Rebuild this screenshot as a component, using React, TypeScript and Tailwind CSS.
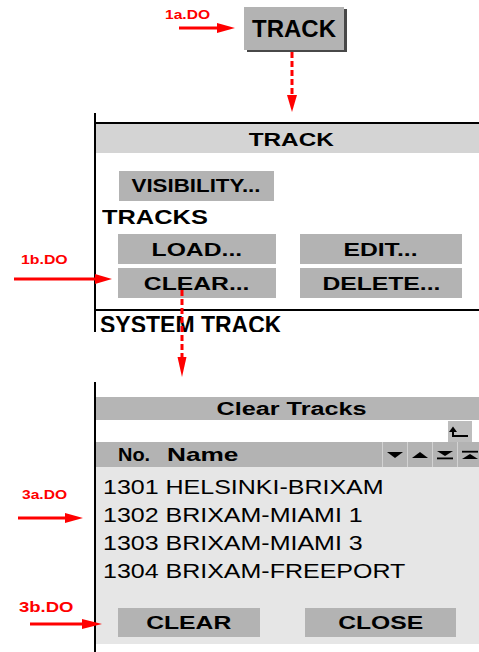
import React from 'react'

const red = '#ff0000'

function GrayButton({ label, className }: { label: string; className: string }) {
  return (
    <div className={`flex items-center justify-center bg-[#b3b3b3] ${className}`}>
      <span className="inline-block scale-x-[1.3] text-[19px] leading-none font-bold text-black">{label}</span>
    </div>
  )
}

function SortIcon({ kind }: { kind: 'down' | 'up' | 'bottom' | 'top' }) {
  return (
    <svg width="16" height="10" viewBox="0 0 16 10">
      {kind === 'down' && <polygon points="0,2 16,2 8,8" fill="#000" />}
      {kind === 'up' && <polygon points="0,8 16,8 8,2" fill="#000" />}
      {kind === 'bottom' && (
        <>
          <polygon points="0,1 16,1 8,6" fill="#000" />
          <rect x="0" y="7.5" width="16" height="1.8" fill="#000" />
        </>
      )}
      {kind === 'top' && (
        <>
          <rect x="0" y="0.8" width="16" height="1.8" fill="#000" />
          <polygon points="0,9 16,9 8,4" fill="#000" />
        </>
      )}
    </svg>
  )
}

const tracks = ['1301 HELSINKI-BRIXAM', '1302 BRIXAM-MIAMI 1', '1303 BRIXAM-MIAMI 3', '1304 BRIXAM-FREEPORT']

function Label({ text, className }: { text: string; className: string }) {
  return (
    <span className={`absolute inline-block origin-left font-bold leading-none text-[#ff0000] ${className}`}>{text}</span>
  )
}

export default function App() {
  return (
    <div className="relative w-[479px] h-[652px] overflow-hidden bg-white font-['Liberation_Sans',Arial,sans-serif] text-black">
      {/* top menu button */}
      <div className="h-[113px] pt-[7px] pl-[244px]">
        <div className="flex h-[43px] w-[100px] items-center justify-center bg-[#b3b3b3] shadow-[3px_2px_0_#484848]">
          <span className="text-[24px] leading-none font-bold">TRACK</span>
        </div>
      </div>

      {/* TRACK menu */}
      <div className="ml-[94px] h-[219px] overflow-hidden border-l-2 border-black pt-[9px]">
        <div className="flex h-[31px] items-center justify-center border-t-2 border-black bg-[#d4d4d4] pl-[7px] pt-[2px]">
          <span className="inline-block scale-x-[1.28] text-[19px] leading-none font-bold">TRACK</span>
        </div>
        <div className="mt-[18px] ml-[23px] flex h-[30px] w-[155px] items-center justify-center bg-[#b3b3b3]">
          <span className="inline-block scale-x-[1.24] text-[18px] leading-none font-bold">VISIBILITY...</span>
        </div>
        <div className="mt-[6px] ml-[6px] text-[20px] leading-[20px] font-bold">
          <span className="inline-block origin-left scale-x-[1.27]">TRACKS</span>
        </div>
        <div className="mt-[7px] ml-[22px] grid grid-cols-[158px_162px] gap-x-[24px] gap-y-[4px]">
          <GrayButton label="LOAD..." className="h-[30px]" />
          <GrayButton label="EDIT..." className="h-[30px]" />
          <GrayButton label="CLEAR..." className="h-[30px]" />
          <GrayButton label="DELETE..." className="h-[30px]" />
        </div>
        <div className="mt-[11px] border-t-2 border-black pt-[3px] pl-[4px] text-[23px] leading-[23px] font-bold">
          SYSTEM TRACK
        </div>
      </div>

      {/* Clear Tracks dialog */}
      <div className="mt-[50px] ml-[94px] h-[270px] border-l-2 border-black pt-[15px]">
        <div className="flex h-[23px] items-center justify-center bg-[#b5b5b5] pl-[8px]">
          <span className="inline-block scale-x-[1.4] text-[18px] leading-none font-bold">Clear Tracks</span>
        </div>
        <div className="flex h-[22px] justify-end pr-[7px] pt-[1px]">
          <div className="h-[21px] w-[24px] bg-[#bdbdbd]">
            <svg width="24" height="21" viewBox="0 0 24 21">
              <polygon points="1,11 9,11 5,5.5" fill="#000" />
              <path d="M5 10 V15 H20" stroke="#000" strokeWidth="2" fill="none" />
            </svg>
          </div>
        </div>
        <div className="-mr-[3px] flex h-[25px] items-center bg-[#b3b3b3]">
          <div className="flex flex-1 items-center pl-[22px] text-[19px] leading-none font-bold">
            <span className="inline-block w-[49px] origin-left scale-x-[1.05]">No.</span>
            <span className="inline-block origin-left scale-x-[1.38]">Name</span>
          </div>
          <div className="flex h-full w-[25px] items-center justify-center border-l border-[#d2d2d2]">
            <SortIcon kind="down" />
          </div>
          <div className="flex h-full w-[25px] items-center justify-center border-l border-[#d2d2d2]">
            <SortIcon kind="up" />
          </div>
          <div className="flex h-full w-[25px] items-center justify-center border-l border-[#d2d2d2]">
            <SortIcon kind="bottom" />
          </div>
          <div className="flex h-full w-[25px] items-center justify-center border-l border-[#d2d2d2]">
            <SortIcon kind="top" />
          </div>
        </div>
        <div className="h-[177px] bg-[#e6e6e6] pt-[6px]">
          {tracks.map((t) => (
            <div key={t} className="pl-[7px] text-[21px] leading-[28px]">
              <span className="inline-block origin-left scale-x-[1.19]">{t}</span>
            </div>
          ))}
          <div className="mt-[23px] ml-[22px] flex gap-x-[45px]">
            <GrayButton label="CLEAR" className="h-[29px] w-[142px]" />
            <GrayButton label="CLOSE" className="h-[29px] w-[151px]" />
          </div>
        </div>
      </div>

      {/* annotations */}
      <Label text="1a.DO" className="left-[165px] top-[8px] scale-x-[1.2] text-[13px]" />
      <Label text="1b.DO" className="left-[21px] top-[253px] scale-x-[1.22] text-[13px]" />
      <Label text="3a.DO" className="left-[22px] top-[488px] scale-x-[1.2] text-[13px]" />
      <Label text="3b.DO" className="left-[19px] top-[600px] scale-x-[1.32] text-[14px]" />

      <svg className="pointer-events-none absolute inset-0" width="479" height="652" viewBox="0 0 479 652">
        <line x1="179" y1="28" x2="218" y2="28" stroke={red} strokeWidth="3" />
        <polygon points="217,23 235,28 217,33" fill={red} />

        <line x1="292" y1="52" x2="292" y2="96" stroke={red} strokeWidth="3" strokeDasharray="6 3" />
        <polygon points="287,95 297,95 292,112" fill={red} />

        <line x1="14" y1="279" x2="96" y2="279" stroke={red} strokeWidth="3" />
        <polygon points="95,274 112,279 95,284" fill={red} />

        <line x1="182" y1="290" x2="182" y2="358" stroke={red} strokeWidth="3" strokeDasharray="6 3" />
        <polygon points="177.5,357 186.5,357 182,377" fill={red} />

        <line x1="18" y1="518" x2="66" y2="518" stroke={red} strokeWidth="3" />
        <polygon points="65,513 83,518 65,523" fill={red} />

        <line x1="30" y1="624" x2="83" y2="624" stroke={red} strokeWidth="3" />
        <polygon points="82,619 102,624 82,629" fill={red} />
      </svg>
    </div>
  )
}
